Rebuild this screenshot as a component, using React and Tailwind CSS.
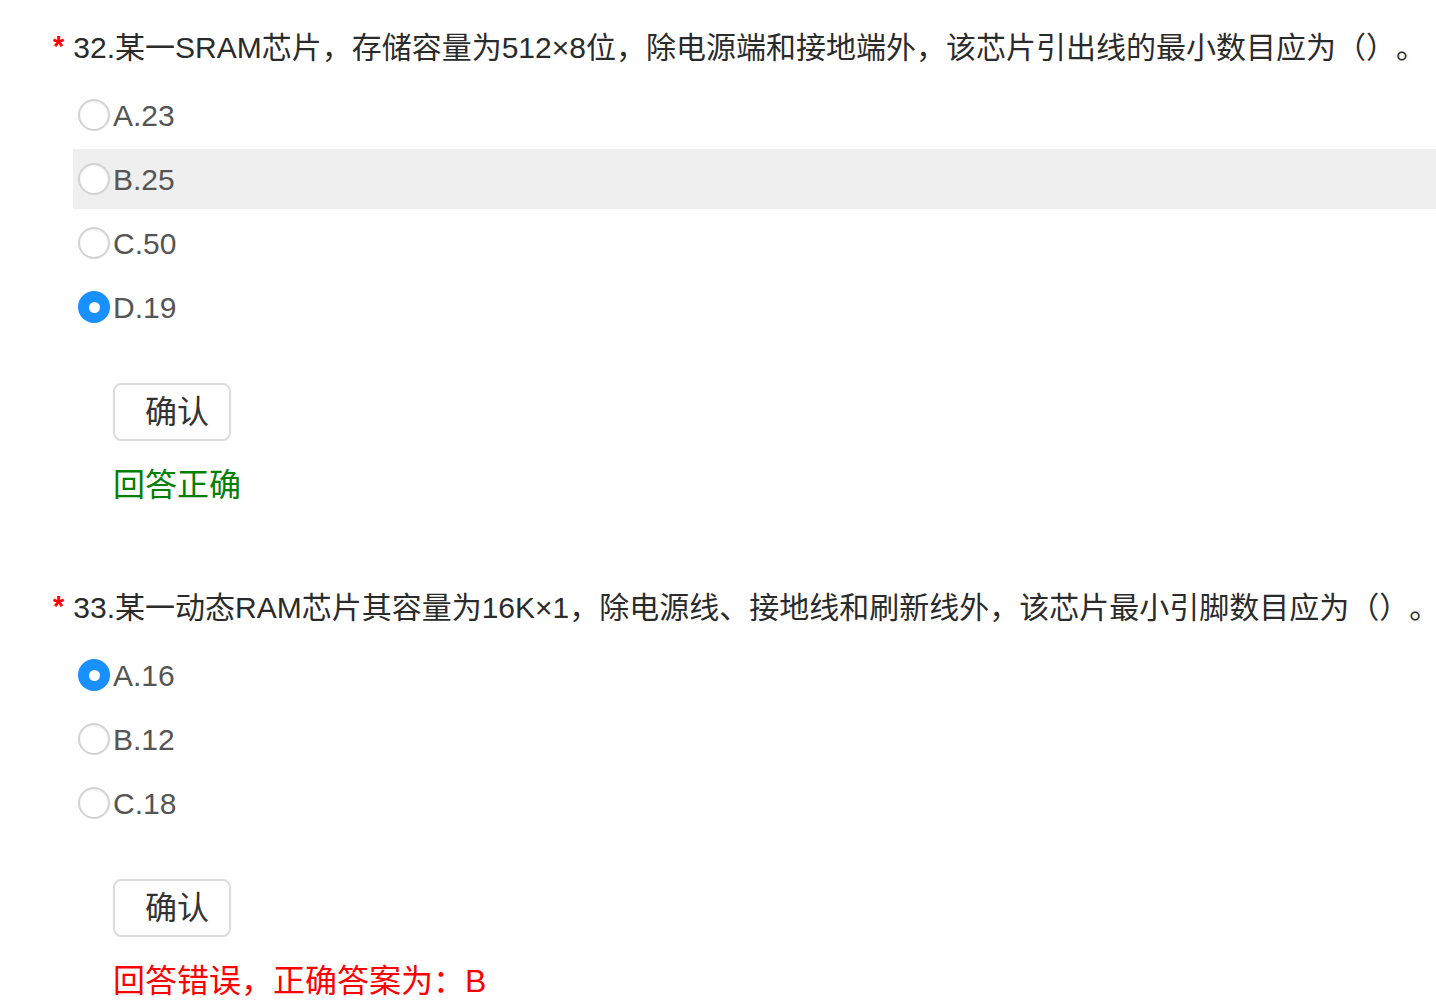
import React from "react";

function Radio({ checked }) {
  if (checked) {
    return (
      <span className="ml-[5px] w-[32px] h-[32px] rounded-full bg-[#1890ff] flex items-center justify-center shrink-0">
        <span className="w-[11px] h-[11px] rounded-full bg-white" />
      </span>
    );
  }
  return (
    <span className="ml-[5px] w-[32px] h-[32px] rounded-full border-2 border-[#d3d3d3] bg-white shadow-[inset_0_1px_2px_rgba(0,0,0,0.08)] shrink-0" />
  );
}

function Question({ title, options, result, resultColor, className }) {
  return (
    <div className={className}>
      <div className="flex items-center h-[40px] pl-[53px] whitespace-nowrap text-[30px] text-[#2b2b2b]">
        <span className="text-[#f00] text-[29px] font-bold mr-[9px]">*</span>
        <span>{title}</span>
      </div>
      <div className="mt-[18px] ml-[73px] flex flex-col gap-[4px]">
        {options.map((o) => (
          <div
            key={o.label}
            className={
              "h-[60px] flex items-center " + (o.hover ? "bg-[#efefef]" : "")
            }
          >
            <Radio checked={o.checked} />
            <span className="ml-[3px] text-[30px] text-[#555]">{o.label}</span>
          </div>
        ))}
      </div>
      <button className="block ml-[113px] mt-[46px] w-[118px] h-[58px] pl-[10px] border-2 border-[#dcdcdc] rounded-[8px] bg-white text-[32px] text-[#333] leading-none">
        确认
      </button>
      <div
        className={
          "ml-[113px] mt-[22px] h-[44px] flex items-center text-[32px] whitespace-nowrap " +
          resultColor
        }
      >
        {result}
      </div>
    </div>
  );
}

export default function App() {
  return (
    <div className="w-full h-[1002px] overflow-hidden bg-white pt-[27px] [text-spacing-trim:space-all] font-['Liberation_Sans','Noto_Sans_CJK_SC',sans-serif]">
      <Question
        title="32.某一SRAM芯片，存储容量为512×8位，除电源端和接地端外，该芯片引出线的最小数目应为（）。"
        options={[
          { label: "A.23" },
          { label: "B.25", hover: true },
          { label: "C.50" },
          { label: "D.19", checked: true },
        ]}
        result="回答正确"
        resultColor="text-[#008000]"
      />
      <Question
        className="mt-[80px]"
        title="33.某一动态RAM芯片其容量为16K×1，除电源线、接地线和刷新线外，该芯片最小引脚数目应为（）。"
        options={[
          { label: "A.16", checked: true },
          { label: "B.12" },
          { label: "C.18" },
        ]}
        result="回答错误，正确答案为：B"
        resultColor="text-[#f00]"
      />
    </div>
  );
}
